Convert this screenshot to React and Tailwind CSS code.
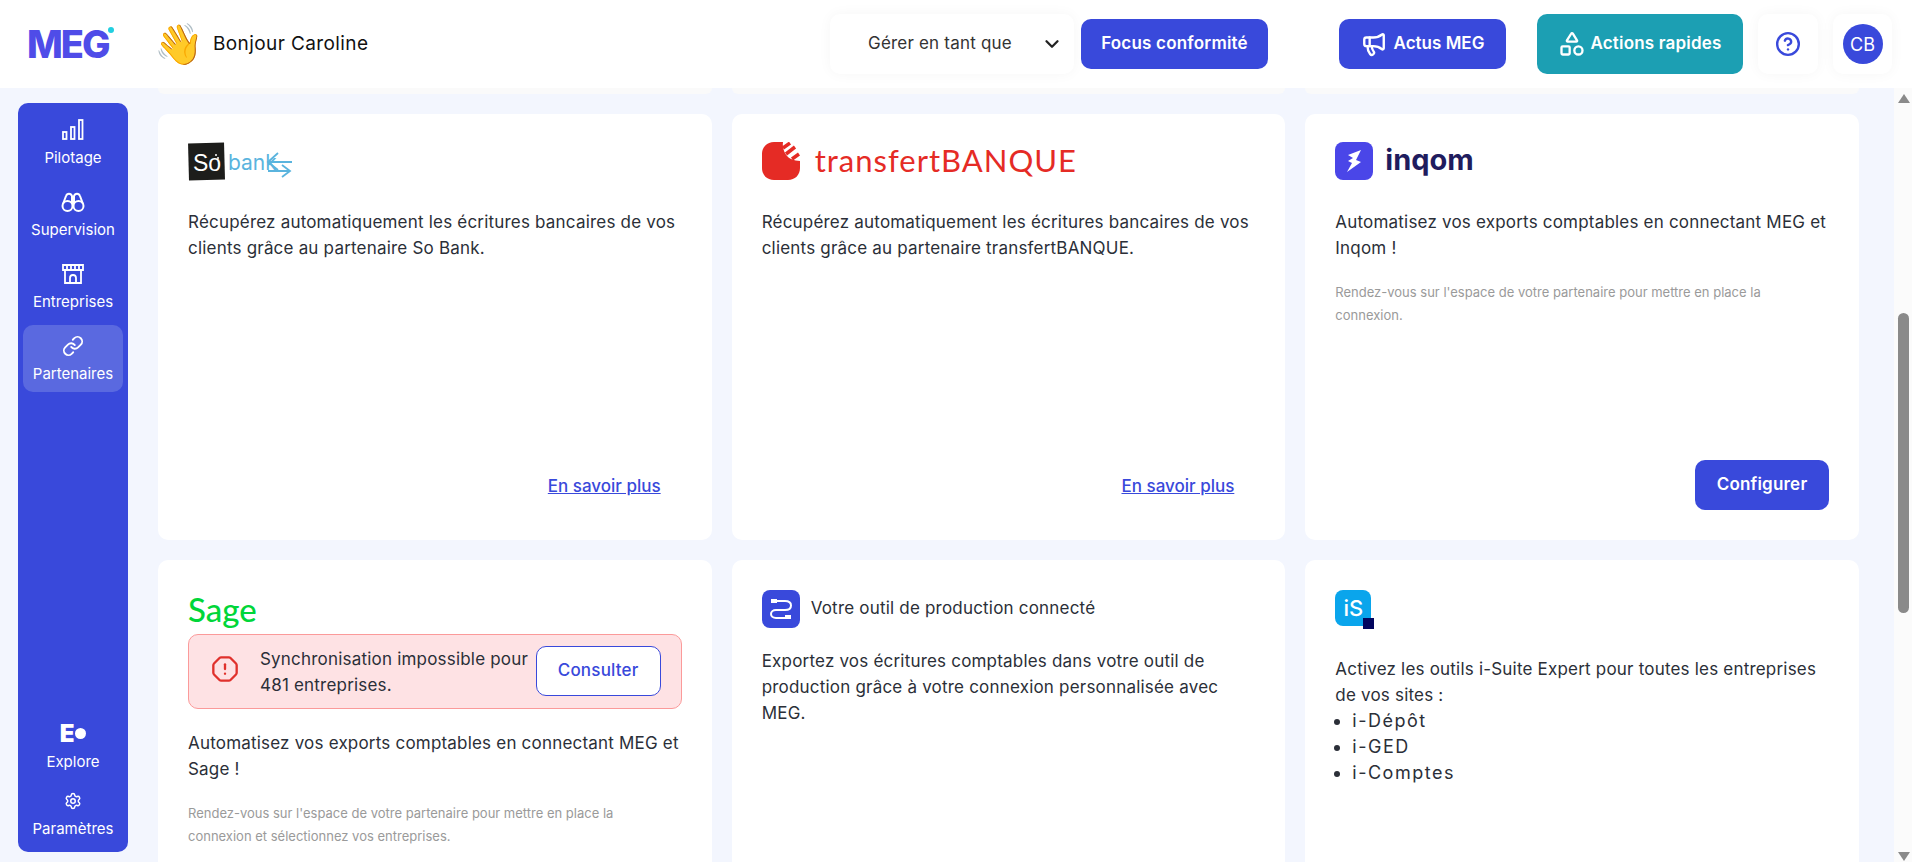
import React from "react";
import { ChevronDown, Megaphone, Shapes, Link, Settings, OctagonAlert, CircleHelp } from "lucide-react";

const font = "font-['Inter','Noto_Sans',sans-serif]";

function NavItem({ icon, label, active }) {
  return (
    <div
      className={`w-[100px] h-[67px] pb-[1px] rounded-[10px] flex flex-col items-center justify-center gap-[7px] text-white ${
        active ? "bg-[#5a69e0]" : ""
      }`}
    >
      <div className="h-[24px] flex items-center justify-center">{icon}</div>
      <span className="text-[15px] leading-[18px]">{label}</span>
    </div>
  );
}

function Card({ children, className = "" }) {
  return <div className={`bg-white rounded-[10px] p-[30px] h-[426px] flex flex-col ${className}`}>{children}</div>;
}

function Body({ children, className = "" }) {
  return <p className={`text-[17px] leading-[26px] text-[#2b2f38] tracking-[0.2px] ${className}`}>{children}</p>;
}

function Hint({ children }) {
  return <p className="mt-[20px] pr-[8px] text-[13px] leading-[23px] text-[#9a9a9a]">{children}</p>;
}

function MoreLink() {
  return (
    <a className="mt-auto self-end mr-[21px] mb-[11px] text-[17px] font-medium text-[#3949db] underline">
      En savoir plus
    </a>
  );
}

function SoBankLogo() {
  return (
    <svg width="108" height="40" viewBox="0 0 108 40" className="-mt-[2px] shrink-0">
      <rect x="0.500" y="1" width="36" height="37" fill="#1d1d1b" transform="rotate(-1.5 19 19)" />
      <text x="5" y="29" fontSize="23" fill="#fff" fontFamily="Liberation Sans">So</text>
      <circle cx="28" cy="13" r="1" fill="#fff" />
      <circle cx="30" cy="16" r="1" fill="#fff" />
      <text x="40" y="28" fontSize="21" fill="#5ab4de" fontFamily="Inter">bank</text>
      <path d="M80 20H104M90 11L80 20L90 28M80 29H102M94 23L102 29L94 35" fill="none" stroke="#5ab4de" strokeWidth="1.800" />
    </svg>
  );
}

function TransfertLogo() {
  return (
    <div className="flex items-start gap-[15px] h-[40px] -mt-[2px] shrink-0">
      <svg width="38" height="38" viewBox="0 0 38 38">
        <path d="M12 0h9c-1 6 2 14 8 17 3 1 6 2 9 2v7c0 7-5 12-12 12H12C5 38 0 33 0 26V12C0 5 5 0 12 0z" fill="#e52b25" />
        <path d="M21 6l7-5M24 12l9-7M30 17l7-5" stroke="#e52b25" strokeWidth="3.500" fill="none" />
      </svg>
      <span className="text-[31px] leading-[36px] text-[#e52b25] tracking-[1px] font-['Lato',sans-serif]">
        transfertBANQUE
      </span>
    </div>
  );
}

function InqomLogo() {
  return (
    <div className="flex items-start gap-[12px] h-[40px] -mt-[2px] shrink-0">
      <svg width="38" height="38" viewBox="0 0 38 38">
        <rect width="38" height="38" rx="8" fill="#4a46e8" />
        <path d="M13 13L26 8L21 18L26 20L12 30L17 21L13 19L18 16Z" fill="#fff" />
      </svg>
      <span className="text-[29px] leading-[36px] font-bold text-[#1f1c5e] font-['Inter',sans-serif]">inqom</span>
    </div>
  );
}

function SageLogo() {
  return (
    <span className="block h-[40px] text-[33px] leading-[38px] font-medium text-[#00d639] font-['Lato',sans-serif]">
      Sage
    </span>
  );
}

function ProductionIcon() {
  return (
    <svg width="38" height="38" viewBox="0 0 38 38">
      <rect width="38" height="38" rx="8" fill="#3949db" />
      <path
        d="M10 11h13c4 0 6 2 6 4.500s-2 4.500-6 4.500h-9c-3 0-5 2-5 4s2 4 5 4h15"
        fill="none"
        stroke="#fff"
        strokeWidth="2"
      />
      <rect x="9" y="9" width="6" height="4" fill="#fff" />
      <rect x="23" y="25" width="6" height="4" fill="#fff" />
    </svg>
  );
}

function ISuiteLogo() {
  return (
    <div className="relative w-[36px] h-[36px] rounded-[8px] bg-[#0aa5ec] flex items-center justify-center shrink-0">
      <span className="text-[22px] leading-none font-medium text-white font-['Inter',sans-serif]">iS</span>
      <div className="absolute right-[-3px] bottom-[-3px] w-[11px] h-[11px] bg-[#02055e]" />
    </div>
  );
}

function PilotageIcon() {
  return (
    <svg width="22" height="22" viewBox="0 0 22 22" fill="none" stroke="#fff" strokeWidth="1.800">
      <rect x="1" y="13" width="3.500" height="7" />
      <rect x="9" y="8" width="3.500" height="12" />
      <rect x="17" y="1" width="3.500" height="19" />
    </svg>
  );
}

function BinocularsIcon() {
  return (
    <svg width="24" height="24" viewBox="0 0 24 22" fill="none" stroke="#fff" strokeWidth="2">
      <circle cx="6.500" cy="15" r="5" />
      <circle cx="17.500" cy="15" r="5" />
      <path d="M2 13l3-8c1-3 5-3 6 0v8M22 13l-3-8c-1-3-5-3-6 0v8M11 12h2" />
    </svg>
  );
}

function StoreIcon() {
  return (
    <svg width="22" height="20" viewBox="0 0 22 20" fill="none" stroke="#fff" strokeWidth="1.800">
      <path d="M1 1h20v5H1zM5 1v5M9 1v5M13 1v5M17 1v5" />
      <path d="M3 6v13h16V6M8 19v-5c0-4 6-4 6 0v5" />
    </svg>
  );
}

export default function App() {
  return (
    <div className={`h-[862px] w-[1912px] overflow-hidden flex flex-col bg-[#f3f6fe] ${font}`}>
      {/* HEADER */}
      <header className="h-[88px] shrink-0 bg-white flex items-center relative z-10">
        <div className="w-[830px] shrink-0 flex items-center">
          <div className="w-[154px] pl-[27px] flex items-start">
            <span className="text-[38px] leading-[40px] font-extrabold tracking-[-2px] text-[#4f4ce8]">MEG</span>
            <span className="w-[6px] h-[6px] ml-[-1px] mt-[3px] rounded-full bg-[#22cfe0]" />
          </div>
          <span className="text-[40px] leading-none w-[59px]">👋</span>
          <span className="text-[19px] text-[#111] tracking-[0.4px]">Bonjour Caroline</span>
        </div>

        <div className="w-[244px] h-[60px] rounded-[10px] bg-white flex items-center justify-between pl-[38px] pr-[11px] shadow-[0_0_14px_rgba(0,0,0,0.04)] text-[#333] text-[17px] tracking-[0.2px]">
          Gérer en tant que
          <ChevronDown size={22} strokeWidth={2.5} className="text-[#222]" />
        </div>
        <button className="ml-[7px] w-[187px] h-[50px] rounded-[10px] bg-[#3949db] text-white font-semibold text-[17px] tracking-[0.2px]">
          Focus conformité
        </button>
        <button className="ml-[71px] w-[167px] h-[50px] rounded-[10px] bg-[#3949db] text-white font-semibold text-[17px] flex items-center justify-center gap-[7px]">
          <Megaphone size={26} strokeWidth={2.2} />
          Actus MEG
        </button>
        <button className="ml-[31px] w-[206px] h-[60px] rounded-[10px] bg-[#1c9fb3] text-white font-semibold text-[17px] tracking-[0.2px] flex items-center justify-center gap-[4px]">
          <Shapes size={28} />
          Actions rapides
        </button>
        <div className="ml-[15px] w-[60px] h-[60px] rounded-[10px] bg-white flex items-center justify-center shadow-[0_0_14px_rgba(0,0,0,0.04)]">
          <CircleHelp size={26} strokeWidth={2.2} className="text-[#3949db]" />
        </div>
        <div className="ml-[15px] w-[59px] h-[60px] rounded-[10px] bg-white flex items-center justify-center shadow-[0_0_14px_rgba(0,0,0,0.04)]">
          <div className="w-[40px] h-[40px] rounded-full bg-[#3949db] text-white text-[18px] flex items-center justify-center">
            CB
          </div>
        </div>
      </header>

      <div className="flex-1 min-h-0 flex">
        {/* SIDEBAR */}
        <aside className="w-[158px] shrink-0 pl-[18px] pt-[15px] pb-[10px]">
          <nav className="w-[110px] h-full rounded-[10px] bg-[#3949db] flex flex-col items-center gap-[5px] pt-[6px] pb-[5px]">
            <NavItem icon={<PilotageIcon />} label="Pilotage" />
            <NavItem icon={<BinocularsIcon />} label="Supervision" />
            <NavItem icon={<StoreIcon />} label="Entreprises" />
            <NavItem icon={<Link size={22} />} label="Partenaires" active />
            <div className="flex-1" />
            <NavItem
              icon={
                <div className="flex items-center gap-[1px]">
                  <span className="text-[24px] leading-none font-black">E</span>
                  <span className="w-[11px] h-[11px] rounded-full bg-white" />
                </div>
              }
              label="Explore"
            />
            <div className="-mt-[5px]">
              <NavItem icon={<Settings size={18} />} label="Paramètres" />
            </div>
          </nav>
        </aside>

        {/* CONTENT */}
        <main className="flex-1 min-w-0 overflow-hidden">
          <div className="w-[1701px] grid grid-cols-3 gap-[20px]">
            <div className="h-[6px] bg-[#fafafa] rounded-b-[10px]" />
            <div className="h-[6px] bg-[#fafafa] rounded-b-[10px]" />
            <div className="h-[6px] bg-[#fafafa] rounded-b-[10px]" />

            <Card>
              <SoBankLogo />
              <Body className="mt-[27px]">
                Récupérez automatiquement les écritures bancaires de vos clients grâce au partenaire So Bank.
              </Body>
              <MoreLink />
            </Card>
            <Card>
              <TransfertLogo />
              <Body className="mt-[27px]">
                Récupérez automatiquement les écritures bancaires de vos clients grâce au partenaire transfertBANQUE.
              </Body>
              <MoreLink />
            </Card>
            <Card>
              <InqomLogo />
              <Body className="mt-[27px]">Automatisez vos exports comptables en connectant MEG et Inqom !</Body>
              <Hint>Rendez-vous sur l'espace de votre partenaire pour mettre en place la connexion.</Hint>
              <button className="mt-auto self-end w-[134px] h-[50px] rounded-[10px] bg-[#3949db] text-white font-semibold text-[17px] tracking-[0.2px]">
                Configurer
              </button>
            </Card>

            <Card>
              <SageLogo />
              <div className="mt-[4px] h-[75px] rounded-[10px] border border-[#fb9a9a] bg-[#fee2e4] flex items-center pl-[22px] pr-[20px]">
                <OctagonAlert size={28} strokeWidth={2} className="text-[#e0312c] shrink-0 -mt-[6px]" />
                <p className="ml-[21px] flex-1 text-[17px] leading-[26px] tracking-[0.2px] text-[#2b2f38]">
                  Synchronisation impossible pour 481 entreprises.
                </p>
                <button className="w-[125px] h-[50px] shrink-0 -mt-[2px] rounded-[10px] border border-[#3949db] bg-white text-[#3949db] font-medium text-[17px] tracking-[0.2px]">
                  Consulter
                </button>
              </div>
              <Body className="mt-[21px]">Automatisez vos exports comptables en connectant MEG et Sage !</Body>
              <Hint>
                Rendez-vous sur l'espace de votre partenaire pour mettre en place la connexion et sélectionnez vos
                entreprises.
              </Hint>
            </Card>
            <Card>
              <div className="flex items-center gap-[11px]">
                <ProductionIcon />
                <span className="text-[17px] tracking-[0.2px] text-[#2b2f38]">Votre outil de production connecté</span>
              </div>
              <Body className="mt-[20px]">
                Exportez vos écritures comptables dans votre outil de production grâce à votre connexion personnalisée
                avec MEG.
              </Body>
            </Card>
            <Card>
              <ISuiteLogo />
              <Body className="mt-[30px]">
                Activez les outils i-Suite Expert pour toutes les entreprises de vos sites :
              </Body>
              <ul className="list-disc pl-[17px] text-[18px] leading-[26px] tracking-[1.5px] text-[#2b2f38]">
                <li>i-Dépôt</li>
                <li>i-GED</li>
                <li>i-Comptes</li>
              </ul>
            </Card>
          </div>
        </main>

        {/* SCROLLBAR */}
        <div className="w-[18px] shrink-0 bg-[#fbfbfb] flex flex-col items-center pt-[6px] pl-[1px]">
          <div className="w-0 h-0 border-x-[6px] border-x-transparent border-b-[9px] border-b-[#8a8a8a]" />
          <div className="mt-[210px] w-[11px] h-[300px] rounded-full bg-[#8a8a8a]" />
          <div className="mt-auto mb-[1px] w-0 h-0 border-x-[6px] border-x-transparent border-t-[9px] border-t-[#8a8a8a]" />
        </div>
      </div>
    </div>
  );
}
